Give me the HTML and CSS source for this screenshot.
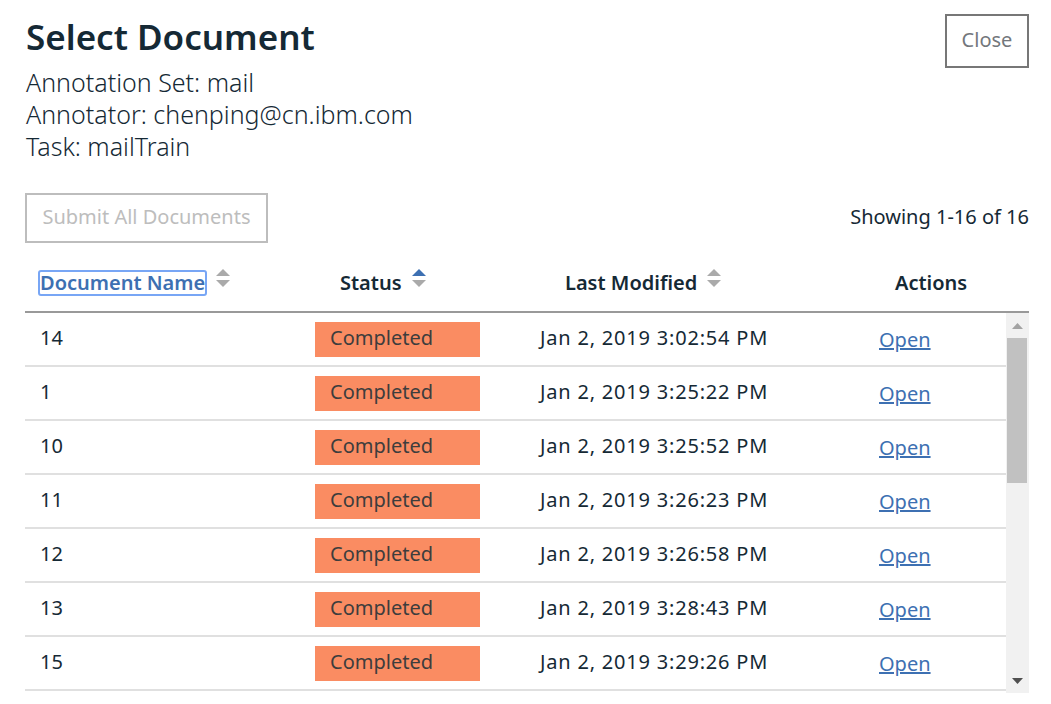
FILE: index.html
```html
<!DOCTYPE html>
<html>
<head>
<meta charset="utf-8">
<link rel="stylesheet" href="styles.css">
</head>
<body>
<div class="dialog">
  <div class="top">
    <div class="heading">
      <h1 class="title">Select Document</h1>
      <div class="meta">Annotation Set: mail</div>
      <div class="meta">Annotator: chenping@cn.ibm.com</div>
      <div class="meta">Task: mailTrain</div>
    </div>
    <button class="close-btn">Close</button>
  </div>
  <div class="toolbar">
    <button class="submit-btn">Submit All Documents</button>
    <div class="count">Showing 1-16 of 16</div>
  </div>
  <div class="table">
    <div class="thead">
      <div class="th th-name"><span class="focus">Document Name</span><span class="sort"><i class="up"></i><i class="down"></i></span></div>
      <div class="th th-status"><span>Status</span><span class="sort"><i class="up active"></i><i class="down"></i></span></div>
      <div class="th th-mod"><span>Last Modified</span><span class="sort"><i class="up"></i><i class="down"></i></span></div>
      <div class="th th-act"><span>Actions</span></div>
    </div>
    <div class="body-wrap">
      <div class="tbody">
        <div class="row"><div class="c-name">14</div><div class="c-status"><span class="badge">Completed</span></div><div class="c-date">Jan 2, 2019 3:02:54 PM</div><div class="c-act"><a href="#" class="link">Open</a></div></div>
        <div class="row"><div class="c-name">1</div><div class="c-status"><span class="badge">Completed</span></div><div class="c-date">Jan 2, 2019 3:25:22 PM</div><div class="c-act"><a href="#" class="link">Open</a></div></div>
        <div class="row"><div class="c-name">10</div><div class="c-status"><span class="badge">Completed</span></div><div class="c-date">Jan 2, 2019 3:25:52 PM</div><div class="c-act"><a href="#" class="link">Open</a></div></div>
        <div class="row"><div class="c-name">11</div><div class="c-status"><span class="badge">Completed</span></div><div class="c-date">Jan 2, 2019 3:26:23 PM</div><div class="c-act"><a href="#" class="link">Open</a></div></div>
        <div class="row"><div class="c-name">12</div><div class="c-status"><span class="badge">Completed</span></div><div class="c-date">Jan 2, 2019 3:26:58 PM</div><div class="c-act"><a href="#" class="link">Open</a></div></div>
        <div class="row"><div class="c-name">13</div><div class="c-status"><span class="badge">Completed</span></div><div class="c-date">Jan 2, 2019 3:28:43 PM</div><div class="c-act"><a href="#" class="link">Open</a></div></div>
        <div class="row"><div class="c-name">15</div><div class="c-status"><span class="badge">Completed</span></div><div class="c-date">Jan 2, 2019 3:29:26 PM</div><div class="c-act"><a href="#" class="link">Open</a></div></div>
      </div>
      <div class="scrollbar">
        <div class="sb-btn"><svg width="11" height="6" viewBox="0 0 11 6"><polygon points="0,6 5.5,0 11,6" fill="#a3a3a3"/></svg></div>
        <div class="sb-track"><div class="sb-thumb"></div></div>
        <div class="sb-btn"><svg width="11" height="6" viewBox="0 0 11 6"><polygon points="0,0 11,0 5.5,6" fill="#505050"/></svg></div>
      </div>
    </div>
  </div>
</div>
</body>
</html>
```
FILE: styles.css
```css
html, body {
  margin: 0;
  padding: 0;
  background: #ffffff;
}
body {
  font-family: "Noto Sans", "Open Sans", sans-serif;
  color: #152935;
}
.dialog {
  width: 1004px;
  padding: 14px 22px 0 25px;
}
.top {
  display: flex;
  justify-content: space-between;
  align-items: flex-start;
}
.title {
  margin: 0 0 6px;
  font-size: 35px;
  font-weight: 600;
  line-height: 46px;
  padding-left: 1px;
  color: #152935;
}
.meta {
  font-size: 25px;
  font-weight: 300;
  line-height: 32px;
  padding-left: 1px;
}
.close-btn {
  width: 84px;
  height: 54px;
  border: 2px solid #777777;
  background: #fff;
  color: #73777c;
  font-family: inherit;
  font-size: 20px;
  padding: 0 0 4px;
}
.toolbar {
  display: flex;
  justify-content: space-between;
  align-items: center;
  margin-top: 31px;
}
.submit-btn {
  width: 243px;
  height: 50px;
  border: 2px solid #bdbdbd;
  background: #fff;
  color: #bdbdbd;
  font-family: inherit;
  font-size: 20px;
  padding: 0 0 4px;
}
.count {
  font-size: 20px;
  color: #152935;
  padding-bottom: 4px;
}
.thead {
  display: grid;
  grid-template-columns: 275px 225px 339px 1fr;
  border-bottom: 2px solid #999999;
  padding: 26px 0 14px;
}
.th {
  display: flex;
  align-items: center;
  font-size: 20px;
  font-weight: 600;
  line-height: 28px;
  color: #152935;
}
.th-name { padding-left: 15px; }
.th-status { padding-left: 40px; }
.th-mod { padding-left: 40px; }
.th-act { padding-left: 31px; }
.focus {
  color: #3d70b2;
  outline: 2px solid #78a6f5;
  outline-offset: -1px;
  border-radius: 2px;
  line-height: 24px;
  padding: 0 1px;
  margin-left: -1px;
}
.sort {
  display: flex;
  flex-direction: column;
  gap: 4px;
  margin-left: 10px;
  margin-top: -10px;
}
.sort i {
  display: block;
  width: 0;
  height: 0;
  border-left: 7px solid transparent;
  border-right: 7px solid transparent;
}
.sort .up { border-bottom: 7px solid #aaaaaa; }
.sort .down { border-top: 7px solid #aaaaaa; }
.sort .up.active { border-bottom-color: #3d70b2; }
.body-wrap {
  display: flex;
  height: 380px;
}
.tbody {
  flex: 1;
}
.scrollbar {
  width: 23px;
  background: #f1f1f1;
  display: flex;
  flex-direction: column;
}
.sb-btn {
  height: 25px;
  display: flex;
  align-items: center;
  justify-content: center;
}
.sb-btn svg { display: block; }
.sb-track {
  flex: 1;
}
.sb-thumb {
  height: 145px;
  margin: 0 2px 0 1px;
  background: #c1c1c1;
}
.row {
  display: grid;
  grid-template-columns: 275px 225px 339px 1fr;
  align-items: center;
  height: 52px;
  border-bottom: 2px solid #e0e0e0;
  font-size: 20px;
  color: #152935;
}
.c-name { padding-left: 15px; padding-bottom: 3px; }
.c-status { padding-left: 15px; }
.c-date { padding-left: 15px; padding-bottom: 3px; letter-spacing: 0.8px; }
.c-act { padding-left: 15px; }
.badge {
  display: block;
  width: 150px;
  height: 35px;
  line-height: 32px;
  padding-left: 15px;
  background: #fa8c62;
  color: #3d3d3d;
}
.link {
  color: #3d70b2;
  text-decoration: underline;
}
```
